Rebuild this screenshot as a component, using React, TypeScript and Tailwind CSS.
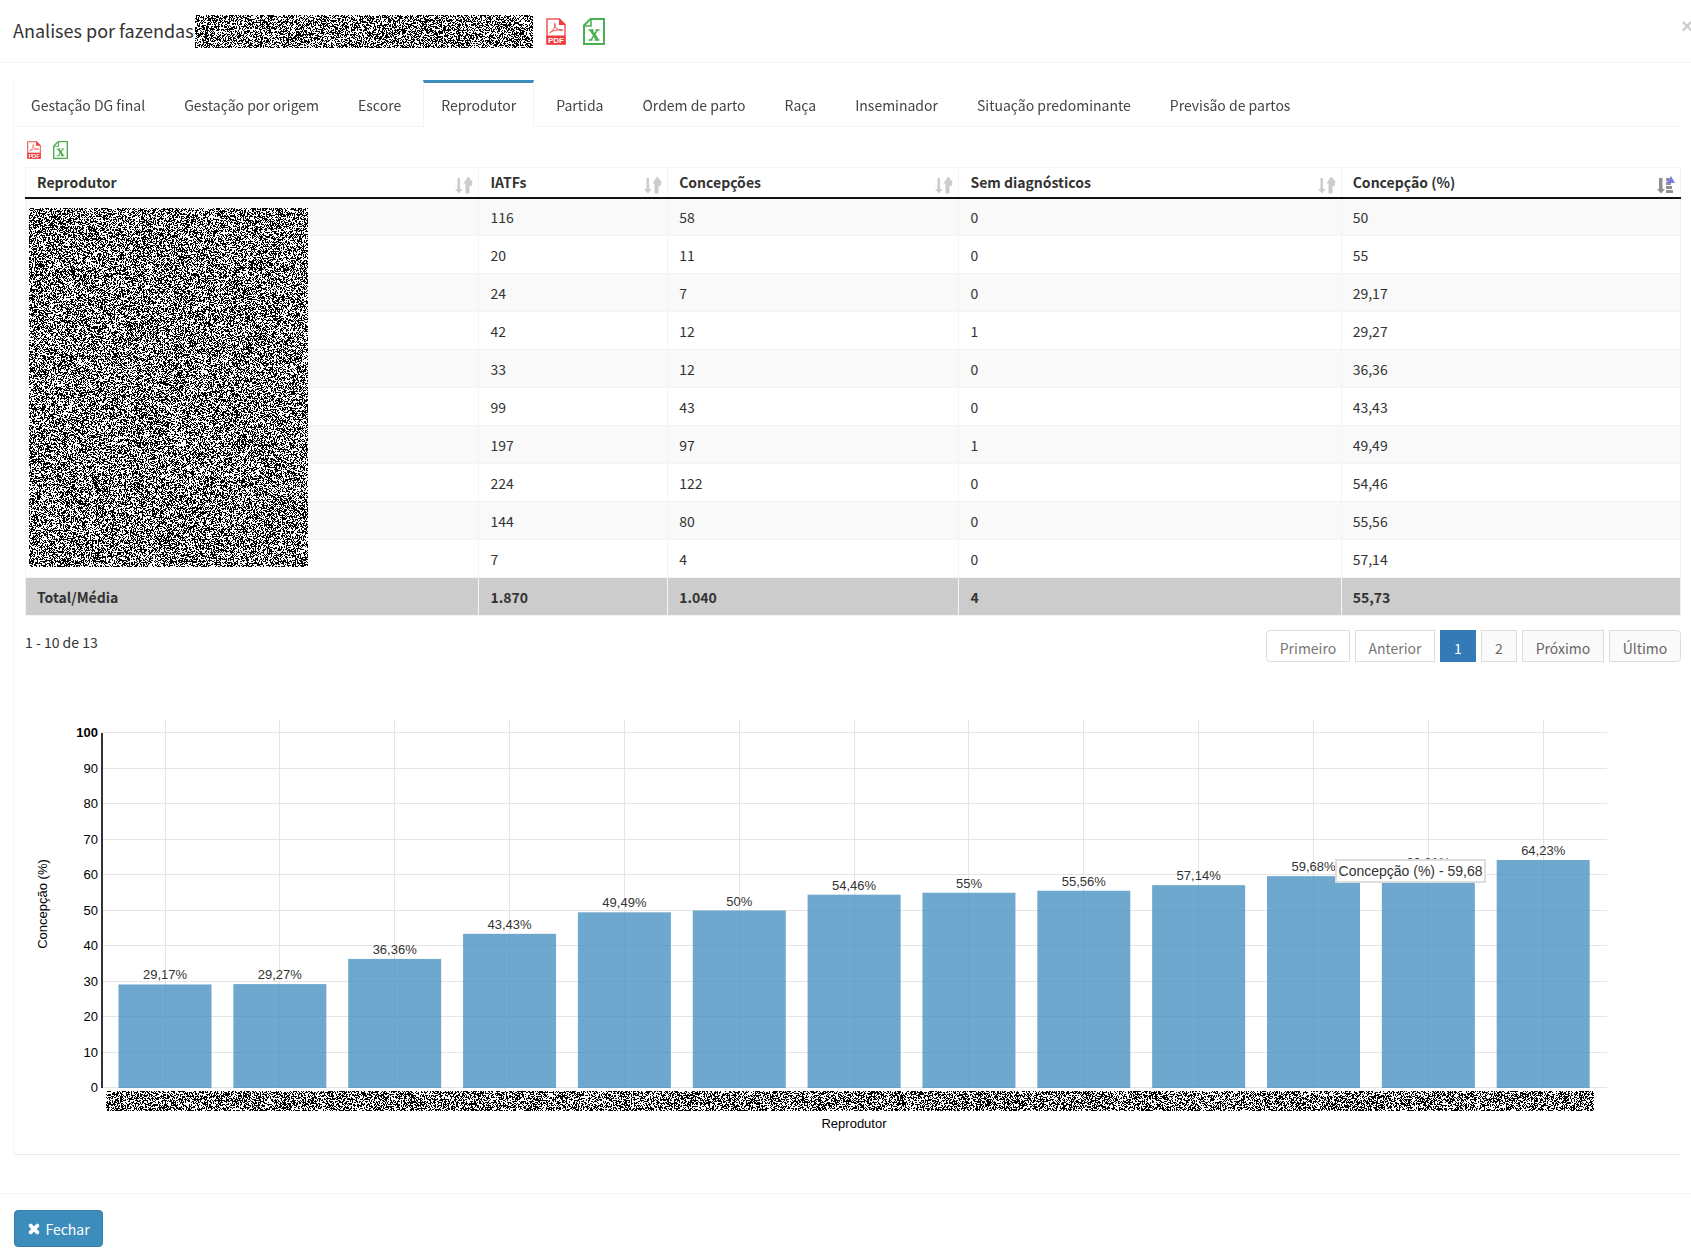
import { useEffect, useRef } from "react";
import clsx from "clsx";
import { FaTimes } from "react-icons/fa";

const tabs = [
  "Gestação DG final",
  "Gestação por origem",
  "Escore",
  "Reprodutor",
  "Partida",
  "Ordem de parto",
  "Raça",
  "Inseminador",
  "Situação predominante",
  "Previsão de partos",
];

const columns = [
  { label: "Reprodutor", width: "w-[27.4%]" },
  { label: "IATFs", width: "w-[11.4%]" },
  { label: "Concepções", width: "w-[17.6%]" },
  { label: "Sem diagnósticos", width: "w-[23.1%]" },
  { label: "Concepção (%)", width: "w-[20.5%]" },
];

const rows = [
  ["116", "58", "0", "50"],
  ["20", "11", "0", "55"],
  ["24", "7", "0", "29,17"],
  ["42", "12", "1", "29,27"],
  ["33", "12", "0", "36,36"],
  ["99", "43", "0", "43,43"],
  ["197", "97", "1", "49,49"],
  ["224", "122", "0", "54,46"],
  ["144", "80", "0", "55,56"],
  ["7", "4", "0", "57,14"],
];

const totals = ["Total/Média", "1.870", "1.040", "4", "55,73"];

const bars = [29.17, 29.27, 36.36, 43.43, 49.49, 50, 54.46, 55, 55.56, 57.14, 59.68, 60.81, 64.23];

const pages = [
  { label: "Primeiro", style: "w-[84px] rounded-l border-[#ddd] bg-white text-[#777]" },
  { label: "Anterior", style: "w-20 border-[#ddd] bg-white text-[#777]" },
  { label: "1", style: "w-9 border-[#337ab7] bg-[#337ab7] text-white" },
  { label: "2", style: "w-9 border-[#ddd] bg-[#fafafa] text-[#666]" },
  { label: "Próximo", style: "w-[82px] border-[#ddd] bg-[#fafafa] text-[#666]" },
  { label: "Último", style: "w-[72px] rounded-r border-[#ddd] bg-[#fafafa] text-[#666]" },
];

function PdfIcon({ className }: { className: string }) {
  return (
    <svg viewBox="0 0 20 27" className={className} preserveAspectRatio="none">
      <path d="M1 1h12.500l5.500 5.500V26H1z" fill="#fff" stroke="#f05252" strokeWidth="1.500" />
      <path d="M13 0.500l6.500 6.500H13z" fill="#ee3b3b" />
      <path d="M0.500 17.500h19v9h-19z" fill="#ee3b3b" />
      <path
        d="M4 15c2-2 5-5 5.500-8.500 .2-1.500-1.500-1.500-1.200 0 .6 3.500 3.700 6 7.500 6.200 1.500.1 1.200-1.300-.3-1.200-4 .1-7.500 1-10.500 2.300-1.500.8-1.500 1.500-1 1.200z"
        fill="none"
        stroke="#f05252"
        strokeWidth="1"
      />
      <text x="10" y="25" fontSize="8" fontWeight="700" textAnchor="middle" fill="#fff" className="font-['Liberation_Sans',sans-serif]">
        PDF
      </text>
    </svg>
  );
}

function ExcelIcon({ className }: { className: string }) {
  return (
    <svg viewBox="0 0 22 27" className={className} preserveAspectRatio="none">
      <path d="M7.500 1H21v25H1V7.500z" fill="#fff" stroke="#4caf50" strokeWidth="2" />
      <path d="M8 1v7H1" fill="none" stroke="#4caf50" strokeWidth="1.500" />
      <path d="M8 12l6.500 10" stroke="#4caf50" strokeWidth="3" />
      <path d="M14.500 12L8 22" stroke="#4caf50" strokeWidth="1.500" />
      <path d="M5.500 12h5M12.500 12h4M5.500 22h4M11.500 22h5" stroke="#4caf50" strokeWidth="1.500" />
    </svg>
  );
}

function SortIcon({ active }: { active: boolean }) {
  if (active)
    return (
      <svg viewBox="0 0 18 18" className="-mb-0.5 h-[18px] w-[18px]">
        <path d="M2 2h3.500v11h2.500l-4 4.500L0 13h2z" fill="#909090" />
        <path d="M9 2h3v3H9zM9 6h5v3H9zM9 10h6v3H9zM9 14h7v3H9z" fill="#909090" />
        <path d="M14 0l4 7H9.500z" fill="#7b7be6" />
      </svg>
    );
  return (
    <svg viewBox="0 0 18 18" className="-mb-0.5 h-[18px] w-[18px]">
      <path d="M2.500 2h2.500v11h2.500L4 17.500 0 13h2.500z" fill="#ccc" />
      <path d="M13 0.500l4.500 5-1 4.500h-2v7.500h-4V7.500H8.500z" fill="#ccc" />
    </svg>
  );
}

// Black and white grain that covers names which must not be shown
function Redacted({ width, height, className }: { width: number; height: number; className?: string }) {
  const ref = useRef<HTMLCanvasElement>(null);

  useEffect(() => {
    const ctx = ref.current?.getContext("2d");
    if (!ctx) return;
    const image = ctx.createImageData(width, height);
    let seed = 1234567;
    for (let i = 0; i < image.data.length; i += 4) {
      seed ^= seed << 13;
      seed ^= seed >>> 17;
      seed ^= seed << 5;
      const shade = (seed >>> 8) % 2 ? 255 : 0;
      image.data.set([shade, shade, shade, 255], i);
    }
    ctx.putImageData(image, 0, 0);
  }, [width, height]);

  return <canvas ref={ref} width={width} height={height} className={className} aria-hidden="true" />;
}

function Chart() {
  const zero = 378;
  const y = (value: number) => zero - value * 3.55;
  const x = (i: number) => 140 + i * 114.85;
  const ticks = [0, 10, 20, 30, 40, 50, 60, 70, 80, 90, 100];

  return (
    <svg viewBox="0 0 1656 430" className="block w-full font-['Liberation_Sans',sans-serif] text-[13px]">
      {ticks.map((tick) => (
        <g key={tick}>
          <line x1="78" x2="1582" y1={Math.round(y(tick)) - 0.5} y2={Math.round(y(tick)) - 0.5} stroke="#e5e5e5" />
          <text x="73" y={y(tick) + 4} textAnchor="end" fontWeight={tick == 100 ? 700 : 400}>
            {tick}
          </text>
        </g>
      ))}
      {bars.map((value, i) => (
        <g key={value}>
          <line x1={Math.floor(x(i)) + 0.5} x2={Math.floor(x(i)) + 0.5} y1="10" y2={zero} stroke="#e5e5e5" />
          <rect x={x(i) - 46.5} y={y(value)} width="93" height={zero - y(value)} fill="#3f8bbe" fillOpacity="0.75" />
          <text x={x(i)} y={y(value) - 5} textAnchor="middle" fill="#333">
            {String(value).replace(".", ",")}%
          </text>
        </g>
      ))}
      <line x1="77" x2="77" y1="23" y2={zero} stroke="#333" strokeWidth="2" />
      <text x="829" y="418" textAnchor="middle">
        Reprodutor
      </text>
      <text transform="translate(22 194) rotate(-90)" textAnchor="middle">
        Concepção (%)
      </text>
    </svg>
  );
}

export default function App() {
  return (
    <div className="overflow-hidden bg-white font-['Noto_Sans_CJK_SC',sans-serif] text-sm leading-5 text-[#333]">
      <header className="flex h-[63px] items-center border-b border-[#f4f4f4] pl-[13px]">
        <h4 className="mr-px pb-0.5 text-lg leading-5">Analises por fazendas</h4>
        <Redacted width={338} height={33} />
        <button className="ml-[13px]" aria-label="Exportar PDF">
          <PdfIcon className="h-[27px] w-5" />
        </button>
        <button className="ml-[17px]" aria-label="Exportar Excel">
          <ExcelIcon className="h-[27px] w-[22px]" />
        </button>
        <button className="-mr-0.5 ml-auto pb-2.5 font-['Liberation_Sans',sans-serif] text-xl font-bold text-[#ccc]">×</button>
      </header>

      <main className="px-[13px] pt-[17px] pr-2.5 pb-[38px]">
        <section className="rounded-b border-b border-l border-b-[#e8e8e8] border-l-[#f8f8f8]">
          <nav className="flex h-[47px] border-b border-[#f4f4f4]">
            {tabs.map((tab) => (
              <a
                key={tab}
                href="#"
                className={clsx(
                  "mr-[5px] h-[47px] border-t-3 px-[17px] pt-3 text-[#444]",
                  tab == "Reprodutor" ? "border-x border-t-[#3c8dbc] border-x-[#f4f4f4] bg-white" : "border-t-transparent"
                )}
              >
                {tab}
              </a>
            ))}
          </nav>

          <div className="pt-3.5 pl-[11px]">
            <div className="flex gap-3 pl-0.5">
              <button aria-label="Exportar tabela em PDF">
                <PdfIcon className="h-[18px] w-[14px]" />
              </button>
              <button aria-label="Exportar tabela em Excel">
                <ExcelIcon className="h-[18px] w-[15px]" />
              </button>
            </div>

            <div className="relative mt-2">
              <table className="w-full table-fixed border-collapse">
                <thead>
                  <tr className="h-[30px] border-b-2 border-[#111]">
                    {columns.map(({ label, width }) => (
                      <th key={label} className={clsx("border-x border-t border-[#f4f4f4] pr-[5px] pl-[11px] text-left font-bold", width)}>
                        <div className="flex items-end justify-between">
                          {label}
                          <SortIcon active={label == "Concepção (%)"} />
                        </div>
                      </th>
                    ))}
                  </tr>
                </thead>
                <tbody>
                  {rows.map((row, i) => (
                    <tr key={i} className="h-[38px] odd:bg-[#f9f9f9]">
                      <td className="border border-[#f4f4f4]"></td>
                      {row.map((cell, j) => (
                        <td key={j} className="border border-[#f4f4f4] pl-[11px]">
                          {cell}
                        </td>
                      ))}
                    </tr>
                  ))}
                </tbody>
                <tfoot>
                  <tr className="h-[38px] bg-[#ccc] font-bold">
                    {totals.map((total) => (
                      <td key={total} className="border border-[#f4f4f4] pl-[11px]">
                        {total}
                      </td>
                    ))}
                  </tr>
                </tfoot>
              </table>
              <Redacted width={279} height={359} className="absolute top-[41px] left-1" />
            </div>

            <div className="mt-3.5 flex justify-between">
              <div className="pt-0.5">1 - 10 de 13</div>
              <div className="flex gap-[5px]">
                {pages.map(({ label, style }) => (
                  <button key={label} className={clsx("h-8 border pt-1", style)}>
                    {label}
                  </button>
                ))}
              </div>
            </div>

            <div className="relative mt-12">
              <Chart />
              <Redacted width={1488} height={20} className="absolute top-[381px] left-[81px]" />
              <div className="absolute top-[149px] left-[1310px] h-6 w-[151px] border-2 border-[#ddd] bg-white text-center font-['Liberation_Sans',sans-serif]">
                Concepção (%) - 59,68
              </div>
            </div>
            <div className="h-3.5"></div>
          </div>
        </section>
      </main>

      <footer className="border-t border-[#f4f4f4] px-3.5 pt-4 pb-3">
        <button className="flex h-[37px] w-[89px] items-center justify-center gap-1 rounded border border-[#367fa9] bg-[#3c8dbc] text-white">
          <FaTimes stroke="white" strokeWidth="40" />
          Fechar
        </button>
      </footer>
    </div>
  );
}
